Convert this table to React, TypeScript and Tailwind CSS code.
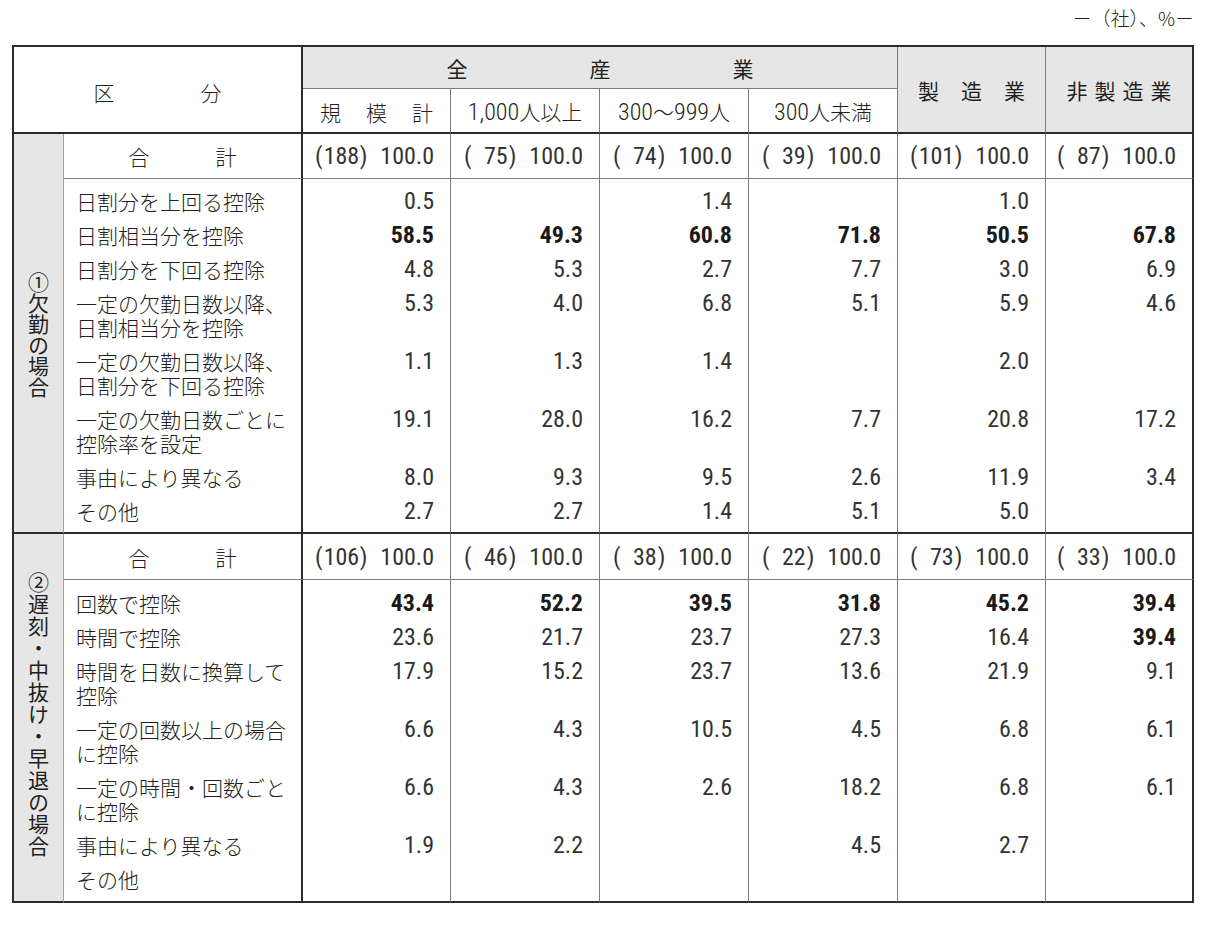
import React from "react";

const NUM = "font-['Liberation_Sans_Narrow','Roboto_Condensed',Roboto,sans-serif] text-[24px]";
const GRAY_R = "border-r border-r-[#7d7d7d]";
const DARK_R = "border-r-2 border-r-[#2b2b2b]";
const LIGHT_R = "border-r border-r-[#a3a3a3]";
const GRAY_B = "border-b border-b-[#7d7d7d]";
const DARK_B = "border-b-2 border-b-[#2b2b2b]";

type Row = {
  label: string[];
  vals: string[];
  bold?: number[];
};

type SectionProps = {
  title: string;
  spacing: string;
  totals: string[];
  rows: Row[];
  padTop: string;
  padBottom: string;
  totalPad: string;
};

const section1: Row[] = [
  { label: ["日割分を上回る控除"], vals: ["0.5", "", "1.4", "", "1.0", ""] },
  {
    label: ["日割相当分を控除"],
    vals: ["58.5", "49.3", "60.8", "71.8", "50.5", "67.8"],
    bold: [0, 1, 2, 3, 4, 5],
  },
  { label: ["日割分を下回る控除"], vals: ["4.8", "5.3", "2.7", "7.7", "3.0", "6.9"] },
  {
    label: ["一定の欠勤日数以降、", "日割相当分を控除"],
    vals: ["5.3", "4.0", "6.8", "5.1", "5.9", "4.6"],
  },
  {
    label: ["一定の欠勤日数以降、", "日割分を下回る控除"],
    vals: ["1.1", "1.3", "1.4", "", "2.0", ""],
  },
  {
    label: ["一定の欠勤日数ごとに", "控除率を設定"],
    vals: ["19.1", "28.0", "16.2", "7.7", "20.8", "17.2"],
  },
  { label: ["事由により異なる"], vals: ["8.0", "9.3", "9.5", "2.6", "11.9", "3.4"] },
  { label: ["その他"], vals: ["2.7", "2.7", "1.4", "5.1", "5.0", ""] },
];

const section2: Row[] = [
  {
    label: ["回数で控除"],
    vals: ["43.4", "52.2", "39.5", "31.8", "45.2", "39.4"],
    bold: [0, 1, 2, 3, 4, 5],
  },
  {
    label: ["時間で控除"],
    vals: ["23.6", "21.7", "23.7", "27.3", "16.4", "39.4"],
    bold: [5],
  },
  {
    label: ["時間を日数に換算して", "控除"],
    vals: ["17.9", "15.2", "23.7", "13.6", "21.9", "9.1"],
  },
  {
    label: ["一定の回数以上の場合", "に控除"],
    vals: ["6.6", "4.3", "10.5", "4.5", "6.8", "6.1"],
  },
  {
    label: ["一定の時間・回数ごと", "に控除"],
    vals: ["6.6", "4.3", "2.6", "18.2", "6.8", "6.1"],
  },
  { label: ["事由により異なる"], vals: ["1.9", "2.2", "", "4.5", "2.7", ""] },
  { label: ["その他"], vals: ["", "", "", "", "", ""] },
];

const Total = ({ n }: { n: string }) => (
  <span className="inline-flex items-baseline">
    <span className="mr-[1px]">(</span>
    <span className="w-[35px] text-right">{n}</span>
    <span className="ml-[1px]">)</span>
    <span className="ml-[13px]">100.0</span>
  </span>
);

const Section = ({ title, spacing, totals, rows, padTop, padBottom, totalPad }: SectionProps) => (
  <>
    <tr>
      <td
        rowSpan={rows.length + 1}
        className={`${LIGHT_R} ${DARK_B} bg-[#e6e6e6] align-middle text-center`}
      >
        <span
          className={`inline-block [writing-mode:vertical-rl] text-[21px] leading-[24px] font-normal ${spacing}`}
        >
          {title}
        </span>
      </td>
      <td className={`${DARK_R} ${GRAY_B} ${totalPad} text-[21px] leading-[24px] font-light`}>
        <div className="flex justify-center gap-[66px]">
          <span>合</span>
          <span>計</span>
        </div>
      </td>
      {totals.map((t, i) => (
        <td
          key={i}
          className={`${i === 5 ? DARK_R : GRAY_R} ${GRAY_B} ${totalPad} pr-[16px] text-right leading-[24px] text-[#333] ${NUM}`}
        >
          <Total n={t} />
        </td>
      ))}
    </tr>
    {rows.map((row, r) => {
      const first = r === 0;
      const last = r === rows.length - 1;
      const pad = `${first ? padTop : "pt-[5px]"} ${last ? padBottom : "pb-[5px]"}`;
      const bottom = last ? DARK_B : "";
      return (
        <tr key={r}>
          <td
            className={`${DARK_R} ${bottom} ${pad} pl-[12px] align-top text-[21px] leading-[24px] font-light whitespace-nowrap`}
          >
            {row.label.map((l, k) => (
              <div key={k}>{l}</div>
            ))}
          </td>
          {row.vals.map((v, i) => (
            <td
              key={i}
              className={`${i === 5 ? DARK_R : GRAY_R} ${bottom} ${pad} pr-[16px] align-top text-right leading-[24px] ${NUM} ${
                row.bold?.includes(i) ? "font-bold text-[#1a1a1a]" : "text-[#333]"
              }`}
            >
              {v}
            </td>
          ))}
        </tr>
      );
    })}
  </>
);

export default function App() {
  return (
    <div className="w-[1210px] h-[932px] bg-white text-[#231f20] font-['Noto_Sans_CJK_JP',sans-serif]">
      <div className="h-[45px] pt-[5px] pr-[16px] text-right text-[19px] leading-[26px] font-light">
        －（社）、%－
      </div>
      <table className="ml-[12px] w-[1182px] table-fixed border-separate border-spacing-0 border-t-2 border-l-2 border-[#2b2b2b]">
        <colgroup>
          <col className="w-[50px]" />
          <col className="w-[239px]" />
          <col className="w-[148px]" />
          <col className="w-[149px]" />
          <col className="w-[149px]" />
          <col className="w-[149px]" />
          <col className="w-[148px]" />
          <col className="w-[148px]" />
        </colgroup>
        <tbody>
          <tr>
            <td
              colSpan={2}
              rowSpan={2}
              className={`${DARK_R} ${DARK_B} text-[21px] leading-[24px] font-light`}
            >
              <div className="flex justify-center gap-[86px] pt-[4px]">
                <span>区</span>
                <span>分</span>
              </div>
            </td>
            <td
              colSpan={4}
              className={`${GRAY_R} ${GRAY_B} bg-[#e6e6e6] pt-[9px] pb-[8px] text-[21px] leading-[24px]`}
            >
              <div className="flex justify-center gap-[122px]">
                <span>全</span>
                <span>産</span>
                <span>業</span>
              </div>
            </td>
            <td
              rowSpan={2}
              className={`${GRAY_R} ${DARK_B} bg-[#e6e6e6] text-[21px] leading-[24px]`}
            >
              <div className="flex justify-center gap-[22px]">
                <span>製</span>
                <span>造</span>
                <span>業</span>
              </div>
            </td>
            <td
              rowSpan={2}
              className={`${DARK_R} ${DARK_B} bg-[#e6e6e6] text-[21px] leading-[24px]`}
            >
              <div className="flex justify-center gap-[7px]">
                <span>非</span>
                <span>製</span>
                <span>造</span>
                <span>業</span>
              </div>
            </td>
          </tr>
          <tr>
            <td className={`${GRAY_R} ${DARK_B} pt-[10px] pb-[8px] text-[21px] leading-[24px] font-light`}>
              <div className="flex justify-center gap-[25px]">
                <span>規</span>
                <span>模</span>
                <span>計</span>
              </div>
            </td>
            <td className={`${GRAY_R} ${DARK_B} pt-[10px] pb-[8px] text-center text-[21px] leading-[24px] font-light`}>
              <span className={NUM}>1,000</span>人以上
            </td>
            <td className={`${GRAY_R} ${DARK_B} pt-[10px] pb-[8px] text-center text-[21px] leading-[24px] font-light`}>
              <span className={NUM}>300</span>～<span className={NUM}>999</span>人
            </td>
            <td className={`${GRAY_R} ${DARK_B} pt-[10px] pb-[8px] text-center text-[21px] leading-[24px] font-light`}>
              <span className={NUM}>300</span>人未満
            </td>
          </tr>
          <Section
            title="①欠勤の場合"
            spacing="tracking-[0px] pt-[8px]"
            totals={["188", "75", "74", "39", "101", "87"]}
            rows={section1}
            padTop="pt-[10px]"
            padBottom="pb-[9px]"
            totalPad="pt-[10px] pb-[10px]"
          />
          <Section
            title="②遅刻・中抜け・早退の場合"
            spacing="tracking-[1px]"
            totals={["106", "46", "38", "22", "73", "33"]}
            rows={section2}
            padTop="pt-[11px]"
            padBottom="pb-[10px]"
            totalPad="pt-[11px] pb-[10px]"
          />
        </tbody>
      </table>
    </div>
  );
}
